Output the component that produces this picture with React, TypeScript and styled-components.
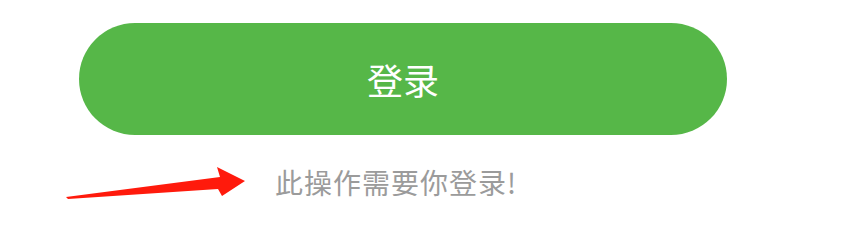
import styled, { createGlobalStyle } from 'styled-components';

const GlobalStyle = createGlobalStyle`
  html, body {
    margin: 0;
    padding: 0;
    background: #ffffff;
  }

  body {
    font-family: 'Microsoft YaHei', 'Noto Sans CJK SC', 'Noto Sans', sans-serif;
  }
`;

const Page = styled.div`
  width: 865px;
  height: 237px;
  padding-top: 23px;
  box-sizing: border-box;
  overflow: hidden;
`;

const LoginButton = styled.button`
  display: flex;
  align-items: center;
  justify-content: center;
  width: 648px;
  height: 112px;
  margin-left: 79px;
  padding: 0;
  border: none;
  border-radius: 56px;
  background-color: #56b748;
  color: #ffffff;
  font-family: inherit;
  font-size: 36px;
  line-height: 1;
  cursor: pointer;
`;

const Notice = styled.div`
  display: flex;
  align-items: flex-start;
  margin-top: 32px;
  padding-left: 66px;
`;

const Arrow = styled.svg`
  flex: none;
  width: 180px;
  height: 34px;
`;

const NoticeText = styled.span`
  margin-top: 1px;
  margin-left: 29px;
  color: #9b9b9b;
  font-size: 28px;
  line-height: 28px;
  letter-spacing: 1px;
`;

const App: React.FC = () => (
  <>
    <GlobalStyle />
    <Page>
      <LoginButton>登录</LoginButton>
      <Notice>
        <Arrow viewBox="0 0 180 34">
          <polygon
            points="0,30 154,10 151,0 179,14 156,29 152,22 2,32"
            fill="#ff1a0c"
          />
        </Arrow>
        <NoticeText>此操作需要你登录!</NoticeText>
      </Notice>
    </Page>
  </>
);

export default App;
